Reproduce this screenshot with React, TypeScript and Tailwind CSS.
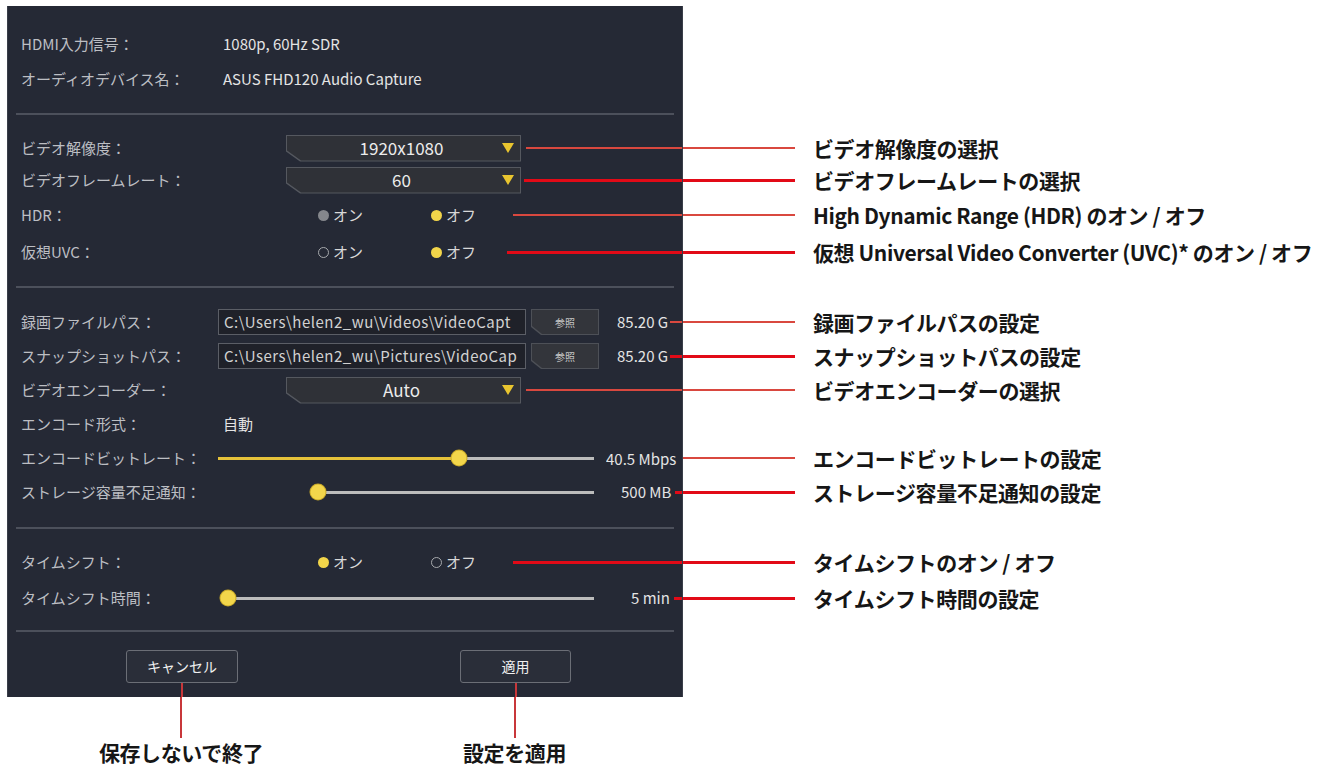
import type { ReactNode } from 'react';

// 注記線（細い線と太い線の2種類）
const thin = 'h-[2px] bg-[#d9483f]';
const thick = 'h-[3px] bg-[#e20a17]';

function Strip({
  h,
  children,
  note,
  bold,
}: {
  h: string;
  children?: ReactNode;
  note?: string;
  bold?: boolean;
}) {
  return (
    <div className="flex">
      <div className={`w-[676px] shrink-0 bg-[#252935] border-x border-[#3a3e49] flex items-center ${h}`}>
        {children}
      </div>
      {note && (
        <div className="flex flex-1 items-center">
          <div className={`w-[112px] ${bold ? thick : thin}`} />
          <span className="ml-[18px] whitespace-nowrap text-[21px] font-bold leading-none tracking-[-0.4px] text-[#161616]">
            {note}
          </span>
        </div>
      )}
    </div>
  );
}

function Divider() {
  return (
    <Strip h="h-[2px]">
      <div className="mx-[8px] h-[2px] flex-1 bg-[#4c505b]" />
    </Strip>
  );
}

function Label({ children }: { children: ReactNode }) {
  return <span className="w-[210px] shrink-0 pl-[13px] text-[15px] text-[#bcbec3]">{children}</span>;
}

function Line({ bold, className = '' }: { bold?: boolean; className?: string }) {
  return <div className={`flex-1 ${bold ? thick : thin} ${className}`} />;
}

function Dropdown({ value }: { value: string }) {
  return (
    <div className="ml-[68px] h-[27px] w-[235px] bg-[#55585f] p-px [clip-path:polygon(0_0,100%_0,100%_100%,14px_100%,0_calc(100%-10px))]">
      <div className="flex h-full w-full items-center bg-[#2f3137] [clip-path:polygon(0_0,100%_0,100%_100%,14px_100%,0_calc(100%-10px))]">
        <span className="flex-1 pl-[14px] text-center text-[17px] text-[#ececec]">{value}</span>
        <svg width="12" height="10" viewBox="0 0 12 10" className="mr-[6px]">
          <path d="M0 0h12L6 10z" fill="#e9c52f" />
        </svg>
      </div>
    </div>
  );
}

function Dot({ kind }: { kind: 'on' | 'off' | 'grey' }) {
  if (kind === 'on') return <span className="h-[11px] w-[11px] rounded-full bg-[#f2d54a]" />;
  if (kind === 'grey') return <span className="h-[11px] w-[11px] rounded-full bg-[#85878c]" />;
  return <span className="h-[11px] w-[11px] rounded-full border border-[#a7a9ad]" />;
}

function Radios({ on, off }: { on: 'on' | 'off' | 'grey'; off: 'on' | 'off' | 'grey' }) {
  return (
    <>
      <div className="ml-[100px] flex w-[113px] items-center gap-[4px] text-[15px] text-[#d8d8d8]">
        <Dot kind={on} />
        オン
      </div>
      <div className="flex w-[82px] items-center gap-[4px] text-[15px] text-[#d8d8d8]">
        <Dot kind={off} />
        オフ
      </div>
    </>
  );
}

function PathBox({ value }: { value: string }) {
  return (
    <>
      <div className="flex h-[26px] w-[308px] items-center overflow-hidden whitespace-nowrap border border-[#5b5e66] bg-[#1f2129] px-[5px] text-[15px] tracking-[0.5px] text-[#d2d2d2]">
        {value}
      </div>
      <div className="ml-[5px] h-[26px] w-[68px] bg-[#4d5057] p-px [clip-path:polygon(0_0,100%_0,100%_100%,10px_100%,0_calc(100%-8px))]">
        <div className="flex h-full w-full items-center justify-center bg-[#33353b] text-[10px] text-[#c9c9c9] [clip-path:polygon(0_0,100%_0,100%_100%,10px_100%,0_calc(100%-8px))]">
          参照
        </div>
      </div>
    </>
  );
}

function Slider({ className, pct }: { className: string; pct: number }) {
  return (
    <div className={`relative flex h-[16px] items-center ${className}`}>
      <div className="h-[3px] w-full bg-[#bcbcbc]">
        <div className="h-full bg-[#e6c23a]" style={{ width: `${pct}%` }} />
      </div>
      <span
        className="absolute top-1/2 h-[15px] w-[15px] -translate-x-1/2 -translate-y-1/2 rounded-full bg-[#f3d64b] shadow-[0_0_0_1px_#c9a929]"
        style={{ left: `${pct}%` }}
      />
    </div>
  );
}

function Val({ children, className = '' }: { children: ReactNode; className?: string }) {
  return <span className={`whitespace-nowrap text-[15px] text-[#e4e4e4] ${className}`}>{children}</span>;
}

function Btn({ children }: { children: ReactNode }) {
  return (
    <div className="flex h-[33px] w-full items-center justify-center rounded-[3px] border border-[#6b6e76] bg-[#2a2e39] text-[14px] text-[#f0f0f0]">
      {children}
    </div>
  );
}

export default function App() {
  return (
    <div className="min-h-screen bg-white pl-[7px] pt-[6px] font-['Noto_Sans_CJK_JP','Noto_Sans',sans-serif]">
      {/* 入力情報 */}
      <Strip h="h-[21px]" />
      <Strip h="h-[35px]">
        <Label>HDMI入力信号：</Label>
        <Val className="ml-[5px]">1080p, 60Hz SDR</Val>
      </Strip>
      <Strip h="h-[35px]">
        <Label>オーディオデバイス名：</Label>
        <Val className="ml-[5px]">ASUS FHD120 Audio Capture</Val>
      </Strip>
      <Strip h="h-[16px]" />
      <Divider />

      {/* ビデオ */}
      <Strip h="h-[17px]" />
      <Strip h="h-[32px]" note="ビデオ解像度の選択">
        <Label>ビデオ解像度：</Label>
        <Dropdown value="1920x1080" />
        <Line className="ml-[5px]" />
      </Strip>
      <Strip h="h-[32px]" note="ビデオフレームレートの選択" bold>
        <Label>ビデオフレームレート：</Label>
        <Dropdown value="60" />
        <Line bold className="ml-[3px]" />
      </Strip>
      <Strip h="h-[38px]" note="High Dynamic Range (HDR) のオン / オフ">
        <Label>HDR：</Label>
        <Radios on="grey" off="on" />
        <Line />
      </Strip>
      <Strip h="h-[36px]" note="仮想 Universal Video Converter (UVC)* のオン / オフ" bold>
        <Label>仮想UVC：</Label>
        <Radios on="off" off="on" />
        <Line bold className="-ml-[6px]" />
      </Strip>
      <Strip h="h-[16px]" />
      <Divider />

      {/* 録画 */}
      <Strip h="h-[17px]" />
      <Strip h="h-[34px]" note="録画ファイルパスの設定">
        <Label>録画ファイルパス：</Label>
        <PathBox value="C:\Users\helen2_wu\Videos\VideoCapt" />
        <Val className="ml-[18px]">85.20 G</Val>
        <Line className="ml-[2px]" />
      </Strip>
      <Strip h="h-[34px]" note="スナップショットパスの設定" bold>
        <Label>スナップショットパス：</Label>
        <PathBox value="C:\Users\helen2_wu\Pictures\VideoCap" />
        <Val className="ml-[18px]">85.20 G</Val>
        <Line bold className="ml-[2px]" />
      </Strip>
      <Strip h="h-[34px]" note="ビデオエンコーダーの選択">
        <Label>ビデオエンコーダー：</Label>
        <Dropdown value="Auto" />
        <Line className="ml-[5px]" />
      </Strip>
      <Strip h="h-[34px]">
        <Label>エンコード形式：</Label>
        <Val className="ml-[5px]">自動</Val>
      </Strip>
      <Strip h="h-[34px]" note="エンコードビットレートの設定">
        <Label>エンコードビットレート：</Label>
        <Slider className="w-[376px]" pct={64} />
        <div className="ml-[12px] flex-1 overflow-hidden">
          <Val>40.5 Mbps</Val>
        </div>
      </Strip>
      <Strip h="h-[34px]" note="ストレージ容量不足通知の設定" bold>
        <Label>ストレージ容量不足通知：</Label>
        <Slider className="ml-[100px] w-[276px]" pct={0} />
        <Val className="ml-[27px]">500 MB</Val>
        <Line bold className="ml-[4px]" />
      </Strip>
      <Strip h="h-[18px]" />
      <Divider />

      {/* タイムシフト */}
      <Strip h="h-[15px]" />
      <Strip h="h-[36px]" note="タイムシフトのオン / オフ" bold>
        <Label>タイムシフト：</Label>
        <Radios on="on" off="off" />
        <Line bold />
      </Strip>
      <Strip h="h-[36px]" note="タイムシフト時間の設定" bold>
        <Label>タイムシフト時間：</Label>
        <Slider className="ml-[8px] w-[368px]" pct={0.5} />
        <Val className="ml-[37px]">5 min</Val>
        <Line bold className="ml-[4px]" />
      </Strip>
      <Strip h="h-[14px]" />
      <Divider />

      {/* ボタン */}
      <Strip h="h-[18px]" />
      <Strip h="h-[33px]">
        <div className="ml-[118px] w-[112px]">
          <Btn>キャンセル</Btn>
        </div>
        <div className="ml-[222px] w-[111px]">
          <Btn>適用</Btn>
        </div>
      </Strip>
      <Strip h="h-[14px] items-stretch">
        <div className="ml-[118px] flex w-[112px] justify-center">
          <div className="w-[2px] bg-[#c8373a]" />
        </div>
        <div className="ml-[222px] flex w-[111px] justify-center">
          <div className="w-[2px] bg-[#c8373a]" />
        </div>
      </Strip>
      <div className="flex">
        <div className="ml-[118px] flex w-[112px] flex-col items-center">
          <div className="h-[41px] w-[2px] bg-[#c8373a]" />
          <span className="whitespace-nowrap text-[21px] font-bold leading-[28px] tracking-[-0.4px] text-[#161616]">保存しないで終了</span>
        </div>
        <div className="ml-[222px] flex w-[111px] flex-col items-center">
          <div className="h-[41px] w-[2px] bg-[#c8373a]" />
          <span className="whitespace-nowrap text-[21px] font-bold leading-[28px] tracking-[-0.4px] text-[#161616]">設定を適用</span>
        </div>
      </div>
    </div>
  );
}
